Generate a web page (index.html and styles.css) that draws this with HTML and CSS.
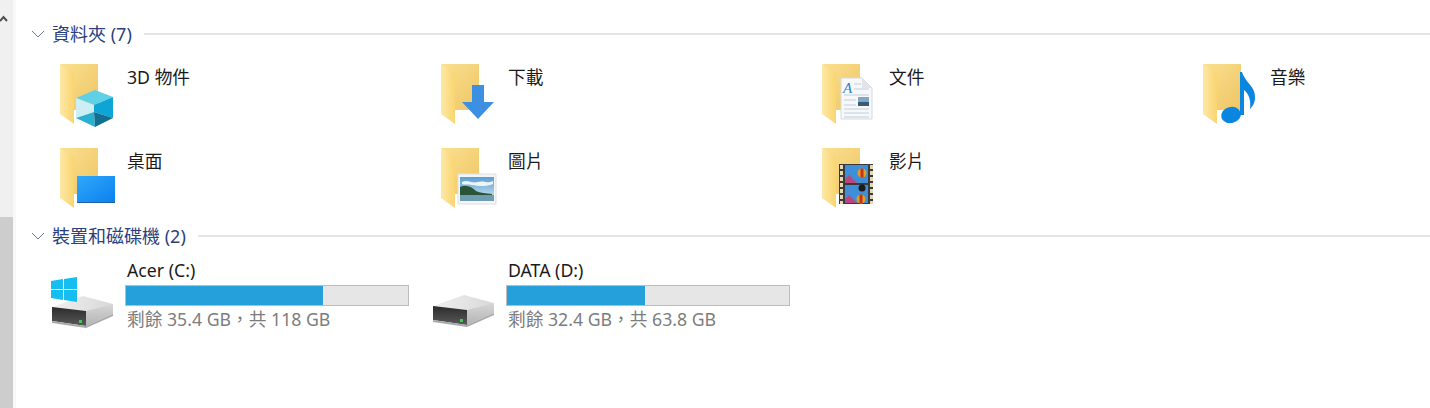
FILE: index.html
```html
<!DOCTYPE html>
<html lang="zh-Hant">
<head>
    <meta charset="UTF-8">
    <title>本機</title>
    <link rel="stylesheet" href="styles.css">
</head>
<body>
    <svg class="defs" aria-hidden="true">
        <defs>
            <linearGradient id="folder-back" x1="0" y1="0" x2="1" y2="1">
                <stop offset="0" stop-color="#fbe08f"/>
                <stop offset="1" stop-color="#eec565"/>
            </linearGradient>
            <linearGradient id="folder-front" x1="0" y1="0" x2="1" y2="0">
                <stop offset="0" stop-color="#fde8a8"/>
                <stop offset="1" stop-color="#fad56f"/>
            </linearGradient>
            <linearGradient id="screen" x1="0" y1="0" x2="1" y2="1">
                <stop offset="0" stop-color="#2fa8fb"/>
                <stop offset="1" stop-color="#0b80ee"/>
            </linearGradient>
            <linearGradient id="sky" x1="0" y1="0" x2="0" y2="1">
                <stop offset="0" stop-color="#5b9fd6"/>
                <stop offset="1" stop-color="#d2e6ee"/>
            </linearGradient>
            <linearGradient id="disk-top" x1="0" y1="0" x2="1" y2="0">
                <stop offset="0" stop-color="#f0f0f0"/>
                <stop offset="1" stop-color="#d8d8d8"/>
            </linearGradient>
            <linearGradient id="disk-side" x1="0" y1="0" x2="0" y2="1">
                <stop offset="0" stop-color="#d6d6d6"/>
                <stop offset="1" stop-color="#b4b4b4"/>
            </linearGradient>
            <linearGradient id="disk-panel" x1="0" y1="0" x2="0" y2="1">
                <stop offset="0" stop-color="#2b2b2b"/>
                <stop offset="1" stop-color="#5a5a5a"/>
            </linearGradient>
            <pattern id="film-holes" width="5" height="6" patternUnits="userSpaceOnUse">
                <rect x="1" y="1" width="3" height="4" fill="#e3d9b8"/>
            </pattern>
            <symbol id="folder" viewBox="0 0 60 66">
                <path d="M3 2H41V48H17V30Z" fill="url(#folder-back)"/>
                <path d="M3 2L17 11V62L3 52Z" fill="url(#folder-front)"/>
            </symbol>
            <symbol id="disk" viewBox="0 0 69 68">
                <path d="M4 46L35 35L65 43V52L34 64L4 58Z" fill="url(#disk-top)"/>
                <path d="M4 46L38 50V65L4 60Z" fill="url(#disk-panel)"/>
                <path d="M38 50L65 43V53L38 65Z" fill="url(#disk-side)"/>
                <path d="M4 60L38 65L65 53V55L38 67L4 62Z" fill="#a9a9a9"/>
                <rect x="31" y="59" width="3" height="3" fill="#35d05a"/>
            </symbol>
        </defs>
    </svg>

    <div class="scrollbar">
        <svg class="scroll-arrow" viewBox="0 0 13 20"><path d="M0 11L3.5 7L7 11" fill="none" stroke="#505050" stroke-width="2"/></svg>
        <div class="scroll-thumb"></div>
    </div>

    <main class="content">
        <section class="group">
            <div class="group-head">
                <svg class="chevron" viewBox="0 0 14 8"><path d="M1 1L7 7L13 1" fill="none" stroke="#6f7b8f" stroke-width="1"/></svg>
                <h2>資料夾 (7)</h2>
                <span class="rule"></span>
            </div>
            <div class="folders">
                <div class="folder">
                    <svg class="folder-icon" viewBox="0 0 60 66">
                        <use href="#folder" width="60" height="66"/>
                        <path d="M19 36L38 28L56 35L37 43Z" fill="#5fd0e6"/>
                        <path d="M19 36L37 43V50L19 56Z" fill="#cdeef4"/>
                        <path d="M37 43L56 35V56L37 50Z" fill="#0da4d6"/>
                        <path d="M19 56L37 50L38 65Z" fill="#2bb0cf"/>
                        <path d="M56 56L37 50L38 65Z" fill="#126f90"/>
                    </svg>
                    <span class="folder-name">3D 物件</span>
                </div>
                <div class="folder">
                    <svg class="folder-icon" viewBox="0 0 60 66">
                        <use href="#folder" width="60" height="66"/>
                        <path d="M34 23H46V40H56L40 57L24 40H34Z" fill="#3d8fe2"/>
                    </svg>
                    <span class="folder-name">下載</span>
                </div>
                <div class="folder">
                    <svg class="folder-icon" viewBox="0 0 60 66">
                        <use href="#folder" width="60" height="66"/>
                        <path d="M22 16H43L53 26V57H22Z" fill="#f6f8fa" stroke="#d5dadf"/>
                        <path d="M43 16V26H53Z" fill="#dfe5ea"/>
                        <path d="M35 22H42M35 27H50M25 33H50M25 38H37M25 43H37M25 47H50M25 51H50M25 55H50" stroke="#c3cedb"/>
                        <text x="24" y="31" class="doc-letter">A</text>
                        <rect x="39" y="35" width="11" height="9" fill="#7fa9c6"/>
                        <rect x="39" y="40" width="11" height="4" fill="#3d5a70"/>
                    </svg>
                    <span class="folder-name">文件</span>
                </div>
                <div class="folder">
                    <svg class="folder-icon" viewBox="0 0 60 66">
                        <use href="#folder" width="60" height="66"/>
                        <ellipse cx="31" cy="53" rx="10" ry="8" fill="#0a86e0" transform="rotate(-15 31 53)"/>
                        <path d="M40 10H42C46 22 56 24 55 37C54.5 41 53 44 50 47C51 38 49 32 44 28V53H40Z" fill="#0a86e0"/>
                    </svg>
                    <span class="folder-name">音樂</span>
                </div>
                <div class="folder">
                    <svg class="folder-icon" viewBox="0 0 60 66">
                        <use href="#folder" width="60" height="66"/>
                        <rect x="20" y="30" width="38" height="27" fill="url(#screen)"/>
                        <path d="M20 56.5H58" stroke="#1b64a6"/>
                    </svg>
                    <span class="folder-name">桌面</span>
                </div>
                <div class="folder">
                    <svg class="folder-icon" viewBox="0 0 60 66">
                        <use href="#folder" width="60" height="66"/>
                        <rect x="20" y="28" width="38" height="30" fill="#f3f5f7" stroke="#dde1e5"/>
                        <rect x="22" y="31" width="34" height="24" fill="url(#sky)"/>
                        <path d="M24 36C30 33 33 38 40 36C46 34 50 38 55 35V38C48 41 40 40 34 39C30 38 26 39 24 38Z" fill="#eef4f6"/>
                        <path d="M22 41C28 38 34 41 38 45C42 47 48 47 54 48V49H22Z" fill="#2a5438"/>
                        <rect x="22" y="49" width="34" height="6" fill="#6f9cb0"/>
                    </svg>
                    <span class="folder-name">圖片</span>
                </div>
                <div class="folder">
                    <svg class="folder-icon" viewBox="0 0 60 66">
                        <use href="#folder" width="60" height="66"/>
                        <rect x="20" y="18" width="34" height="40" fill="#3a3a3a"/>
                        <rect x="20" y="18" width="5" height="40" fill="url(#film-holes)"/>
                        <rect x="49" y="18" width="5" height="40" fill="url(#film-holes)"/>
                        <rect x="26" y="19" width="23" height="18" fill="#3f8fd8"/>
                        <rect x="26" y="39" width="23" height="18" fill="#3f8fd8"/>
                        <path d="M26 37V33L30 29L34 33L38 37Z" fill="#b9477f"/>
                        <path d="M26 57V53L30 49L34 53L38 57Z" fill="#b9477f"/>
                        <circle cx="43" cy="27" r="4.5" fill="#e0a020"/>
                        <path d="M41.5 22.5H44.5V31.5H41.5Z" fill="#c8301f"/>
                        <circle cx="42" cy="53" r="4.5" fill="#e0a020"/>
                        <path d="M40.5 48.5H43.5V57H40.5Z" fill="#c8301f"/>
                        <circle cx="43" cy="42" r="3.5" fill="#1c1c1c"/>
                    </svg>
                    <span class="folder-name">影片</span>
                </div>
            </div>
        </section>

        <section class="group group-drives">
            <div class="group-head">
                <svg class="chevron" viewBox="0 0 14 8"><path d="M1 1L7 7L13 1" fill="none" stroke="#6f7b8f" stroke-width="1"/></svg>
                <h2>裝置和磁碟機 (2)</h2>
                <span class="rule"></span>
            </div>
            <div class="drives">
                <div class="drive">
                    <svg class="drive-icon" viewBox="0 0 69 68">
                        <use href="#disk" width="69" height="68"/>
                        <path d="M3 20L15 18V28H3ZM16 18L29 16V28H16ZM3 29H15V39L3 37ZM16 29H29V41L16 39Z" fill="#15bdf0"/>
                    </svg>
                    <div class="drive-info">
                        <div class="drive-name">Acer (C:)</div>
                        <div class="meter"><div class="meter-fill" style="width: 70%"></div></div>
                        <div class="drive-free">剩餘 35.4 GB，共 118 GB</div>
                    </div>
                </div>
                <div class="drive">
                    <svg class="drive-icon" viewBox="0 0 69 68">
                        <use href="#disk" width="69" height="68" y="-1"/>
                    </svg>
                    <div class="drive-info">
                        <div class="drive-name">DATA (D:)</div>
                        <div class="meter"><div class="meter-fill" style="width: 49%"></div></div>
                        <div class="drive-free">剩餘 32.4 GB，共 63.8 GB</div>
                    </div>
                </div>
            </div>
        </section>
    </main>
</body>
</html>
```

FILE: styles.css
```css
html, body {
    height: 100%;
}
body {
    margin: 0;
    display: flex;
    overflow: hidden;
    background-color: #fff;
    color: #1a1a1a;
    font-family: "Noto Sans", "Noto Sans CJK TC", sans-serif;
    font-size: 17.7px;
}
.defs {
    display: block;
    width: 0;
    height: 0;
}
.scrollbar {
    flex: none;
    width: 13px;
    display: flex;
    flex-direction: column;
    justify-content: space-between;
    background-color: #f0f0f0;
    border-right: 3px solid #f8f8f8;
}
.scroll-arrow {
    display: block;
    width: 13px;
    height: 20px;
    margin-top: 10px;
}
.scroll-thumb {
    height: 191px;
    background-color: #cdcdcd;
}
.content {
    flex: 1;
    min-width: 0;
    padding-top: 22px;
}
.group-head {
    display: flex;
    align-items: center;
    height: 24px;
    padding-left: 15px;
}
.chevron {
    flex: none;
    width: 14px;
    height: 8px;
    margin-right: 7px;
}
.group-head h2 {
    margin: 0;
    font-size: 18px;
    font-weight: 400;
    line-height: 24px;
    color: #2b3f80;
    white-space: nowrap;
}
.rule {
    flex: 1;
    height: 2px;
    margin-left: 12px;
    background-color: #e5e5e5;
}
.folders {
    display: grid;
    grid-template-columns: repeat(3, 381px) 1fr;
    grid-auto-rows: 66px;
    row-gap: 18px;
    margin-top: 16px;
    padding-left: 41px;
}
.folder {
    display: flex;
    align-items: flex-start;
    gap: 10px;
}
.folder-icon {
    flex: none;
    width: 60px;
    height: 66px;
}
.folder-name {
    margin-top: 3px;
    line-height: 24px;
}
.doc-letter {
    font-family: "Liberation Serif", serif;
    font-size: 15px;
    font-style: italic;
    fill: #2f7fd0;
}
.group-drives {
    margin-top: 12px;
}
.drives {
    display: grid;
    grid-template-columns: repeat(2, 381px);
    margin-top: 13px;
    padding-left: 32px;
}
.drive {
    display: flex;
    align-items: flex-start;
    gap: 8px;
}
.drive-icon {
    flex: none;
    width: 69px;
    height: 68px;
}
.drive-info {
    width: 284px;
}
.drive-name {
    height: 24px;
    padding-left: 2px;
    line-height: 18px;
}
.meter {
    box-sizing: border-box;
    height: 21px;
    background-color: #e6e6e6;
    border: 1px solid #bcbcbc;
}
.meter-fill {
    height: 100%;
    background-color: #26a0da;
}
.drive-free {
    padding-left: 2px;
    margin-top: 1px;
    color: #7d7d7d;
    line-height: 24px;
    white-space: nowrap;
}
```
